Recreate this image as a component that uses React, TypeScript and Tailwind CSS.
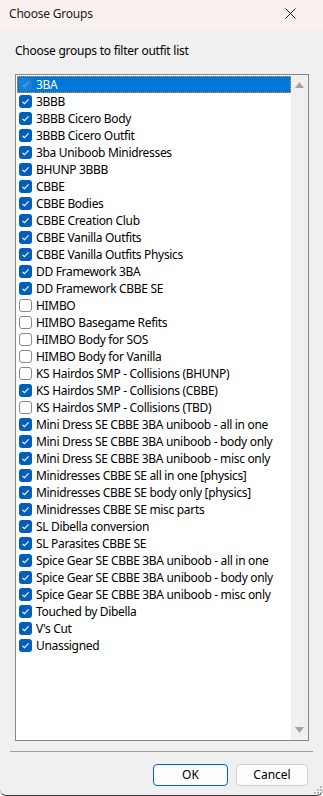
import React from "react";

const items: [string, boolean][] = [
  ["3BA", true],
  ["3BBB", true],
  ["3BBB Cicero Body", true],
  ["3BBB Cicero Outfit", true],
  ["3ba Uniboob Minidresses", true],
  ["BHUNP 3BBB", true],
  ["CBBE", true],
  ["CBBE Bodies", true],
  ["CBBE Creation Club", true],
  ["CBBE Vanilla Outfits", true],
  ["CBBE Vanilla Outfits Physics", true],
  ["DD Framework 3BA", true],
  ["DD Framework CBBE SE", true],
  ["HIMBO", false],
  ["HIMBO Basegame Refits", false],
  ["HIMBO Body for SOS", false],
  ["HIMBO Body for Vanilla", false],
  ["KS Hairdos SMP - Collisions (BHUNP)", false],
  ["KS Hairdos SMP - Collisions (CBBE)", true],
  ["KS Hairdos SMP - Collisions (TBD)", false],
  ["Mini Dress SE CBBE 3BA uniboob - all in one", true],
  ["Mini Dress SE CBBE 3BA uniboob - body only", true],
  ["Mini Dress SE CBBE 3BA uniboob - misc only", true],
  ["Minidresses CBBE SE all in one [physics]", true],
  ["Minidresses CBBE SE body only [physics]", true],
  ["Minidresses CBBE SE misc parts", true],
  ["SL Dibella conversion", true],
  ["SL Parasites CBBE SE", true],
  ["Spice Gear SE CBBE 3BA uniboob - all in one", true],
  ["Spice Gear SE CBBE 3BA uniboob - body only", true],
  ["Spice Gear SE CBBE 3BA uniboob - misc only", true],
  ["Touched by Dibella", true],
  ["V's Cut", true],
  ["Unassigned", true],
];

function Check({ checked, faded }: { checked: boolean; faded?: boolean }) {
  if (!checked) {
    return (
      <div className="w-[13px] h-[13px] rounded-[3px] border border-[#8a8a8a] bg-white shrink-0" />
    );
  }
  return (
    <div
      className={
        faded
          ? "w-[13px] h-[13px] rounded-[3px] bg-[#1a80d6] shrink-0 flex items-center justify-center"
          : "w-[13px] h-[13px] rounded-[3px] bg-[#005fb8] shrink-0 flex items-center justify-center"
      }
    >
      <svg width="9" height="9" viewBox="0 0 9 9">
        <path
          d="M1.5 4.8 L3.5 6.7 L7.6 2.3"
          fill="none"
          stroke={faded ? "#5ea5e6" : "#ffffff"}
          strokeWidth="1.1"
        />
      </svg>
    </div>
  );
}

export default function App() {
  return (
    <div
      className="w-[323px] h-[796px] bg-[#f0f0f0] flex flex-col overflow-hidden border-b border-[#3a3a3a] rounded-bl-[6px] rounded-br-[6px] relative"
      style={{ fontFamily: '"Noto Sans", "Segoe UI", sans-serif' }}
    >
      {/* Title bar */}
      <div className="h-[30px] bg-[#f9f1ed] flex items-center pl-[9px] pr-[27px] pb-[3px] shrink-0">
        <div className="text-[12px] text-[#1a1a1a] flex-1 leading-none tracking-[-0.2px]">Choose Groups</div>
        <svg width="11" height="11" viewBox="0 0 11 11">
          <path d="M0.5 0.5 L10.5 10.5 M10.5 0.5 L0.5 10.5" stroke="#1a1a1a" strokeWidth="1" />
        </svg>
      </div>

      {/* Label */}
      <div className="pl-[15px] pt-[13px] text-[12px] text-black leading-[16px] tracking-[-0.25px]">
        Choose groups to filter outfit list
      </div>

      {/* List box */}
      <div className="ml-[15px] mr-[14px] mt-[15px] h-[667px] border border-[#828790] bg-white flex">
        <div className="flex-1 pt-[1px] pl-[1px]">
          {items.map(([name, checked], i) => (
            <div
              key={name}
              className={
                i === 0
                  ? "h-[17px] flex items-center gap-[4px] pl-[2px] bg-[#0078d7] text-white outline-dotted outline-1 outline-[#ff8c1a] -outline-offset-1"
                  : "h-[17px] flex items-center gap-[4px] pl-[2px] text-black"
              }
            >
              <Check checked={checked} faded={i === 0} />
              <span className="text-[12px] leading-none whitespace-nowrap tracking-[-0.32px]">{name}</span>
            </div>
          ))}
        </div>
        <div className="w-[17px] bg-[#f0f0f0] flex flex-col justify-between items-center py-[7px]">
          <svg width="9" height="6" viewBox="0 0 9 6">
            <path d="M4.5 0 L9 6 L0 6 Z" fill="#a3a3a3" />
          </svg>
          <svg width="9" height="6" viewBox="0 0 9 6">
            <path d="M0 0 L9 0 L4.5 6 Z" fill="#a3a3a3" />
          </svg>
        </div>
      </div>

      {/* Separator */}
      <div className="mx-[10px] mt-[10px] h-[1px] bg-[#a0a0a0]" />

      {/* Buttons */}
      <div className="flex justify-end gap-[8px] pr-[15px] mt-[12px]">
        <button className="w-[75px] h-[22px] rounded-[4px] border border-[#0067c0] bg-[#fdfdfd] text-[12px] text-black leading-none">
          OK
        </button>
        <button className="w-[72px] h-[22px] rounded-[4px] border border-[#d0d0d0] bg-[#fdfdfd] text-[12px] text-black leading-none">
          Cancel
        </button>
      </div>

      {/* Size grip */}
      <svg className="absolute right-[1px] bottom-[1px]" width="10" height="10" viewBox="0 0 10 10">
        <rect x="8" y="2" width="2" height="2" fill="#b8b8b8" />
        <rect x="5" y="5" width="2" height="2" fill="#b8b8b8" />
        <rect x="8" y="5" width="2" height="2" fill="#b8b8b8" />
        <rect x="2" y="8" width="2" height="2" fill="#b8b8b8" />
        <rect x="5" y="8" width="2" height="2" fill="#b8b8b8" />
        <rect x="8" y="8" width="2" height="2" fill="#b8b8b8" />
      </svg>
    </div>
  );
}
